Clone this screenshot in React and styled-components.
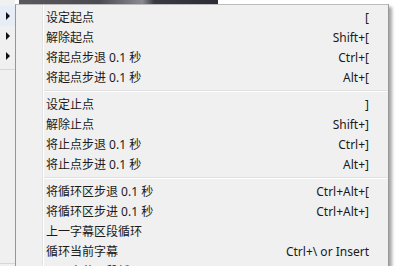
import React from "react";
import styled, { createGlobalStyle } from "styled-components";

const Global = createGlobalStyle`
  html, body { margin: 0; padding: 0; background: #ffffff; }
  body { font-family: "Noto Sans", "Noto Sans CJK SC", sans-serif; }
`;

const Screen = styled.div`
  width: 400px;
  height: 266px;
  overflow: hidden;
  display: flex;
  background: #ffffff;
`;

const ParentMenu = styled.div`
  width: 15px;
  flex: none;
  height: 266px;
  background: #f0f0f0;
  display: flex;
  flex-direction: column;
  padding-top: 6px;
  box-sizing: border-box;
`;

const ParentItem = styled.div`
  height: 20px;
  display: flex;
  align-items: center;
  padding-left: 6px;
  background: ${(p) => (p.$active ? "#e6edf7" : "transparent")};
`;

const Arrow = styled.span`
  width: 0;
  height: 0;
  border-top: 4px solid transparent;
  border-bottom: 4px solid transparent;
  border-left: 4px solid #111;
`;

const ParentSep = styled.div`
  height: 1px;
  background: #d7d7d7;
  margin-top: ${(p) => p.$top}px;
`;

const Right = styled.div`
  display: flex;
  flex-direction: column;
  width: 374px;
  flex: none;
`;

const TopStrip = styled.div`
  height: 4px;
  display: flex;
  padding-left: 4px;
  background: #ffffff;
`;

const Picture = styled.div`
  width: 199px;
  height: 4px;
  background: linear-gradient(90deg, #5a5a5e 0%, #4a4a50 40%, #8a8a90 62%, #3a3a44 68%, #2c2c36 100%);
`;

const Menu = styled.div`
  flex: 1;
  background: #f0f0f0;
  border-top: 1px solid #bcbcbc;
  border-left: 1px solid #979797;
  border-right: 1px solid #979797;
  box-shadow: 3px 3px 3px rgba(0, 0, 0, 0.35);
  padding-top: 2px;
  position: relative;
  display: flex;
  flex-direction: column;
  background-image: linear-gradient(90deg, transparent 26px, #e2e3e3 26px, #e2e3e3 27px, #ffffff 27px, #ffffff 28px, transparent 28px);
`;

const Item = styled.div`
  height: 20px;
  flex: none;
  display: flex;
  align-items: center;
  justify-content: space-between;
  padding-left: 30px;
  padding-right: 19px;
  font-size: 12px;
  color: #1a1a1a;
  white-space: nowrap;
`;

const Label = styled.span`
  font-family: "Noto Sans", "Noto Sans CJK SC", sans-serif;
`;

const Key = styled.span`
  font-family: "Noto Sans", sans-serif;
  font-size: 12px;
`;

const Sep = styled.div`
  height: 7px;
  flex: none;
  display: flex;
  align-items: center;
  padding-left: 28px;
  padding-right: 1px;
  &::after {
    content: "";
    flex: 1;
    height: 1px;
    background: #e0e0e0;
    border-bottom: 1px solid #ffffff;
  }
`;

const groups = [
  [
    ["设定起点", "["],
    ["解除起点", "Shift+["],
    ["将起点步退 0.1 秒", "Ctrl+["],
    ["将起点步进 0.1 秒", "Alt+["],
  ],
  [
    ["设定止点", "]"],
    ["解除止点", "Shift+]"],
    ["将止点步退 0.1 秒", "Ctrl+]"],
    ["将止点步进 0.1 秒", "Alt+]"],
  ],
  [
    ["将循环区步退 0.1 秒", "Ctrl+Alt+["],
    ["将循环区步进 0.1 秒", "Ctrl+Alt+]"],
    ["上一字幕区段循环", ""],
    ["循环当前字幕", "Ctrl+\\ or Insert"],
    ["下一字幕区段循环", ""],
  ],
];

export default function App() {
  return (
    <>
      <Global />
      <Screen>
        <ParentMenu>
          <ParentItem $active>
            <Arrow />
          </ParentItem>
          <ParentItem>
            <Arrow />
          </ParentItem>
          <ParentItem>
            <Arrow />
          </ParentItem>
          <ParentSep $top={3} />
          <ParentSep $top={193} />
        </ParentMenu>
        <Right>
          <TopStrip>
            <Picture />
          </TopStrip>
          <Menu>
            {groups.map((g, gi) => (
              <React.Fragment key={gi}>
                {gi > 0 && <Sep />}
                {g.map(([l, k]) => (
                  <Item key={l}>
                    <Label>{l}</Label>
                    <Key>{k}</Key>
                  </Item>
                ))}
              </React.Fragment>
            ))}
          </Menu>
        </Right>
      </Screen>
    </>
  );
}
